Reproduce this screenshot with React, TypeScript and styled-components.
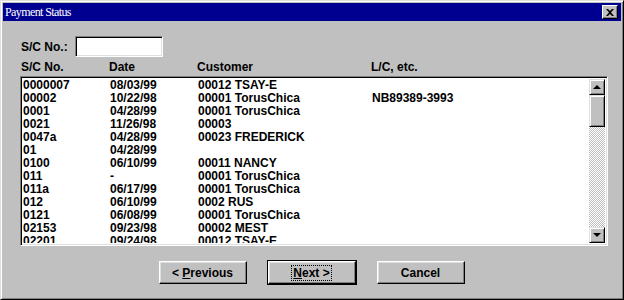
import styled, { createGlobalStyle } from "styled-components";

const GlobalStyle = createGlobalStyle`
  html, body { margin: 0; padding: 0; background: #c0c0c0; }
  body { width: 624px; height: 300px; overflow: hidden; }
`;

const Window = styled.div`
  width: 624px;
  height: 300px;
  box-sizing: border-box;
  background: #c0c0c0;
  border: 1px solid;
  border-color: #dfdfdf #000 #000 #dfdfdf;
  box-shadow: inset 1px 1px #fff, inset -1px -1px #808080;
  padding: 2px;
  display: flex;
  flex-direction: column;
  font-family: "Liberation Sans", Arial, sans-serif;
  font-weight: bold;
  font-size: 12px;
  color: #000;
`;

const TitleBar = styled.div`
  height: 18px;
  background: #000090;
  display: flex;
  align-items: center;
  justify-content: space-between;
  padding: 0 3px 0 2px;
`;

const TitleText = styled.span`
  font-family: "Liberation Serif", "Times New Roman", serif;
  font-weight: normal;
  font-size: 12px;
  color: #fff;
  letter-spacing: -0.6px;
`;

const CloseButton = styled.div`
  width: 16px;
  height: 14px;
  box-sizing: border-box;
  background: #c0c0c0;
  border: 1px solid;
  border-color: #fff #000 #000 #fff;
  box-shadow: inset -1px -1px #808080;
  display: flex;
  align-items: center;
  justify-content: center;
`;

const Body = styled.div`
  flex: 1;
  padding: 15px 13px 0 17px;
  display: flex;
  flex-direction: column;
`;

const SearchRow = styled.div`
  display: flex;
  align-items: center;
  gap: 7px;
  height: 21px;
  padding-left: 1px;
`;

const TextInput = styled.div`
  width: 88px;
  height: 21px;
  box-sizing: border-box;
  background: #fff;
  border: 1px solid;
  border-color: #808080 #fff #fff #808080;
  box-shadow: inset 1px 1px #000, inset -1px -1px #dfdfdf;
`;

const Columns = styled.div<{ $first: number }>`
  display: grid;
  grid-template-columns: ${(p) => p.$first}px 88px 174px 1fr;
  align-items: center;
`;

const HeaderRow = styled(Columns)`
  height: 14px;
  margin-top: 3px;
  padding-left: 1px;
`;

const ListBox = styled.div`
  width: 588px;
  height: 170px;
  margin-top: 2px;
  box-sizing: border-box;
  background: #fff;
  border: 1px solid;
  border-color: #808080 #fff #fff #808080;
  box-shadow: inset 1px 1px #000, inset -1px -1px #dfdfdf;
  padding: 2px;
  display: flex;
  overflow: hidden;
`;

const Rows = styled.div`
  flex: 1;
  overflow: hidden;
`;

const Row = styled(Columns)`
  height: 13px;
  line-height: 13px;
  white-space: nowrap;
`;

const ScrollBar = styled.div`
  width: 16px;
  display: flex;
  flex-direction: column;
  background: repeating-conic-gradient(#c0c0c0 0 25%, #fff 0 50%) 0 0 / 2px 2px;
`;

const ScrollPart = styled.div<{ $h: number }>`
  height: ${(p) => p.$h}px;
  flex: none;
  box-sizing: border-box;
  background: #c0c0c0;
  border: 1px solid;
  border-color: #dfdfdf #000 #000 #dfdfdf;
  box-shadow: inset 1px 1px #fff, inset -1px -1px #808080;
  display: flex;
  align-items: center;
  justify-content: center;
`;

const Track = styled.div`
  flex: 1;
`;

const Arrow = styled.div<{ $down?: boolean }>`
  width: 0;
  height: 0;
  border-left: 4px solid transparent;
  border-right: 4px solid transparent;
  ${(p) =>
    p.$down ? "border-top: 4px solid #000;" : "border-bottom: 4px solid #000;"}
`;

const ButtonRow = styled.div`
  display: flex;
  justify-content: center;
  gap: 21px;
  margin-top: 15px;
  padding-right: 5px;
`;

const Button = styled.div<{ $default?: boolean }>`
  width: 88px;
  height: 23px;
  box-sizing: border-box;
  background: #c0c0c0;
  display: flex;
  align-items: center;
  justify-content: center;
  border: 1px solid;
  border-color: #fff #000 #000 #fff;
  box-shadow: inset -1px -1px #808080, inset 1px 1px #dfdfdf;
  ${(p) =>
    p.$default &&
    `box-shadow: inset -1px -1px #808080, inset 1px 1px #dfdfdf, 0 0 0 1px #000;`}
`;

const Focus = styled.span`
  outline: 1px dotted #000;
  padding: 0 1px;
`;

const rows = [
  ["0000007", "08/03/99", "00012 TSAY-E", ""],
  ["00002", "10/22/98", "00001 TorusChica", "NB89389-3993"],
  ["0001", "04/28/99", "00001 TorusChica", ""],
  ["0021", "11/26/98", "00003", ""],
  ["0047a", "04/28/99", "00023 FREDERICK", ""],
  ["01", "04/28/99", "", ""],
  ["0100", "06/10/99", "00011 NANCY", ""],
  ["011", "-", "00001 TorusChica", ""],
  ["011a", "06/17/99", "00001 TorusChica", ""],
  ["012", "06/10/99", "0002 RUS", ""],
  ["0121", "06/08/99", "00001 TorusChica", ""],
  ["02153", "09/23/98", "00002 MEST", ""],
  ["02201", "09/24/98", "00012 TSAY-E", ""],
];

export default function App() {
  return (
    <>
      <GlobalStyle />
      <Window>
        <TitleBar>
          <TitleText>Payment Status</TitleText>
          <CloseButton>
            <svg width="8" height="7" viewBox="0 0 8 7">
              <path d="M0 0h2l2 2 2-2h2L5 3.5 8 7H6L4 5 2 7H0l3-3.5z" fill="#000" />
            </svg>
          </CloseButton>
        </TitleBar>
        <Body>
          <SearchRow>
            <span>S/C No.:</span>
            <TextInput />
          </SearchRow>
          <HeaderRow $first={88}>
            <span>S/C No.</span>
            <span>Date</span>
            <span>Customer</span>
            <span>L/C, etc.</span>
          </HeaderRow>
          <ListBox>
            <Rows>
              {rows.map((r) => (
                <Row $first={87} key={r[0]}>
                  {r.map((c, i) => (
                    <span key={i}>{c}</span>
                  ))}
                </Row>
              ))}
            </Rows>
            <ScrollBar>
              <ScrollPart $h={16}>
                <Arrow />
              </ScrollPart>
              <ScrollPart $h={32} />
              <Track />
              <ScrollPart $h={16}>
                <Arrow $down />
              </ScrollPart>
            </ScrollBar>
          </ListBox>
          <ButtonRow>
            <Button>
              <span>
                &lt; <u>P</u>revious
              </span>
            </Button>
            <Button $default>
              <Focus>
                <u>N</u>ext &gt;
              </Focus>
            </Button>
            <Button>Cancel</Button>
          </ButtonRow>
        </Body>
      </Window>
    </>
  );
}
